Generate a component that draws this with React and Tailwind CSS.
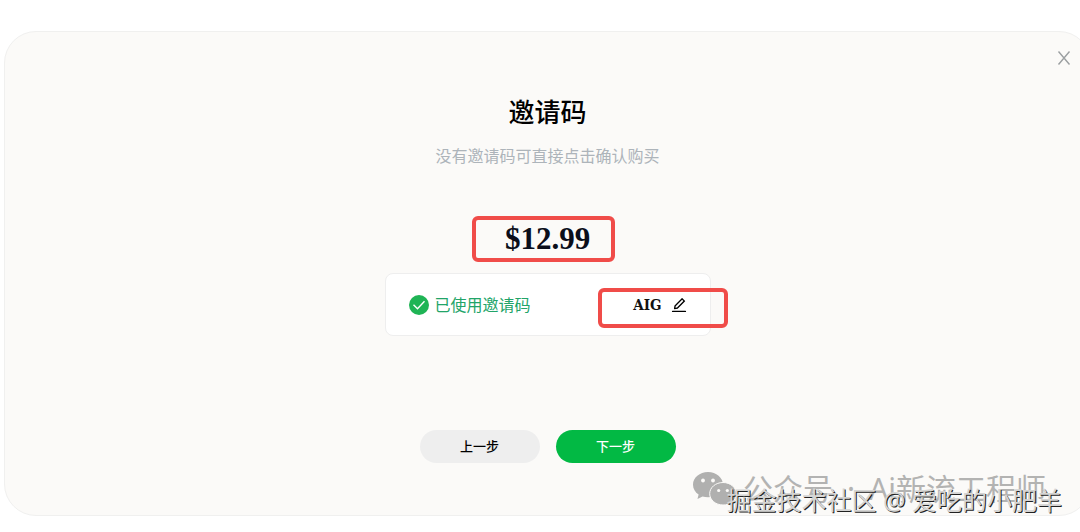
import { AiOutlineEdit } from "react-icons/ai";

const sans = "font-['Noto_Sans','Noto_Sans_CJK_SC',sans-serif]";
const slab = "font-['Roboto_Slab','DejaVu_Serif_Condensed','DejaVu_Serif',serif]";
const figures = "font-['Roboto_Slab','Liberation_Serif',serif]";

function Steps() {
  return (
    <div className="mt-[94px] flex gap-4">
      <button className="h-[33px] w-[120px] rounded-full bg-[#eeeeee] text-[13px] font-medium text-black">上一步</button>
      <button className="h-[33px] w-[120px] rounded-full bg-[#02b944] text-[13px] font-medium text-white">下一步</button>
    </div>
  );
}

function InviteCard() {
  return (
    <div className="mt-[11px] flex h-[63px] w-[326px] items-center justify-between rounded-lg border border-[#eeeeee] bg-white px-[22px]">
      <p className="flex items-center gap-[5px] text-[16px] leading-6 text-[#22a468]">
        <svg viewBox="0 0 22 22" className="size-[22px]" aria-hidden="true">
          <circle cx="11" cy="11" r="10" fill="#1fb455" />
          <path d="M5.5 10.8l4 4 7-7.6" fill="none" stroke="#fff" strokeWidth="1.4" />
        </svg>
        已使用邀请码
      </p>
      <div className="relative flex items-center gap-2">
        <span className={`text-[15px] leading-6 font-bold text-[#111111] ${slab}`}>AIG</span>
        <button aria-label="编辑邀请码" className="text-black">
          <AiOutlineEdit className="size-[18px]" />
        </button>
        <span className="absolute -right-10 -left-[35px] -top-[5px] h-10 rounded-md border-4 border-[#f04c49]" />
      </div>
    </div>
  );
}

function ChatLogo() {
  return (
    <svg viewBox="0 0 44 34" className="h-[34px] w-[44px]" aria-hidden="true">
      <path
        fill="#b0b0af"
        d="M15 0C6.700 0 0 5.600 0 12.700c0 4 2.200 7.500 5.600 9.900L4.500 27l5-2.500c1.700.5 3.500.8 5.500.8 8.300 0 15-5.700 15-12.600S23.300 0 15 0z"
      />
      <path
        fill="#b0b0af"
        stroke="#fbfaf8"
        strokeWidth="1"
        d="M30 10.500c-7.400 0-13.300 5-13.300 11.200S22.600 33 30 33c1.600 0 3.100-.2 4.500-.6l4.300 2-.9-3.500c3.300-2.100 5.400-5.400 5.400-9.200 0-6.200-5.900-11.200-13.300-11.200z"
      />
      <g fill="#fbfaf8">
        <circle cx="10" cy="8.500" r="1.900" />
        <circle cx="20" cy="8.500" r="1.900" />
        <circle cx="25.700" cy="18.500" r="1.600" />
        <circle cx="34.300" cy="18.500" r="1.600" />
      </g>
    </svg>
  );
}

function Watermarks() {
  return (
    <>
      <div className="absolute right-[34px] bottom-[23px] flex items-center gap-[6px] whitespace-nowrap text-[#b3b3b2]">
        <ChatLogo />
        <span className="flex gap-[14px] text-[30px] leading-10">
          <span>公众号</span>
          <span>·</span>
          <span>Ai新流工程师</span>
        </span>
      </div>
      <div className="absolute right-[18px] bottom-[14px] text-[25px] leading-9 whitespace-nowrap text-[#d4d4d3] [text-shadow:1px_1px_0_#222222]">
        掘金技术社区 @ 爱吃的小肥羊
      </div>
    </>
  );
}

export default function App() {
  return (
    <main className={`relative min-h-screen overflow-hidden bg-white pt-[31px] pb-4 pl-1 ${sans}`}>
      <section className="relative -mr-[11px] flex min-h-[485px] flex-col items-center rounded-[32px] border border-[#f0f0ef] bg-[#fbfaf8]">
        <button aria-label="关闭" className="absolute top-[19px] right-[19px]">
          <svg viewBox="0 0 14 14" className="size-[14px]" fill="none" stroke="#9b9fa1" strokeWidth="1.4">
            <path d="M1.500 .5l11 13M12.500 .5l-11 13" />
          </svg>
        </button>
        <h1 className="mt-[60px] text-[26px] leading-10 font-medium text-black">邀请码</h1>
        <p className="mt-3 text-[16px] leading-6 text-[#adb4ba]">没有邀请码可直接点击确认购买</p>
        <div className="relative mt-12 flex h-[46px] items-center justify-center">
          <strong className={`text-[31px] leading-10 font-bold text-[#0b0e1a] ${figures}`}>$12.99</strong>
          <span className="absolute inset-y-0 -right-[25px] -left-[33px] rounded-md border-4 border-[#f04c49]" />
        </div>
        <InviteCard />
        <Steps />
      </section>
      <Watermarks />
    </main>
  );
}
